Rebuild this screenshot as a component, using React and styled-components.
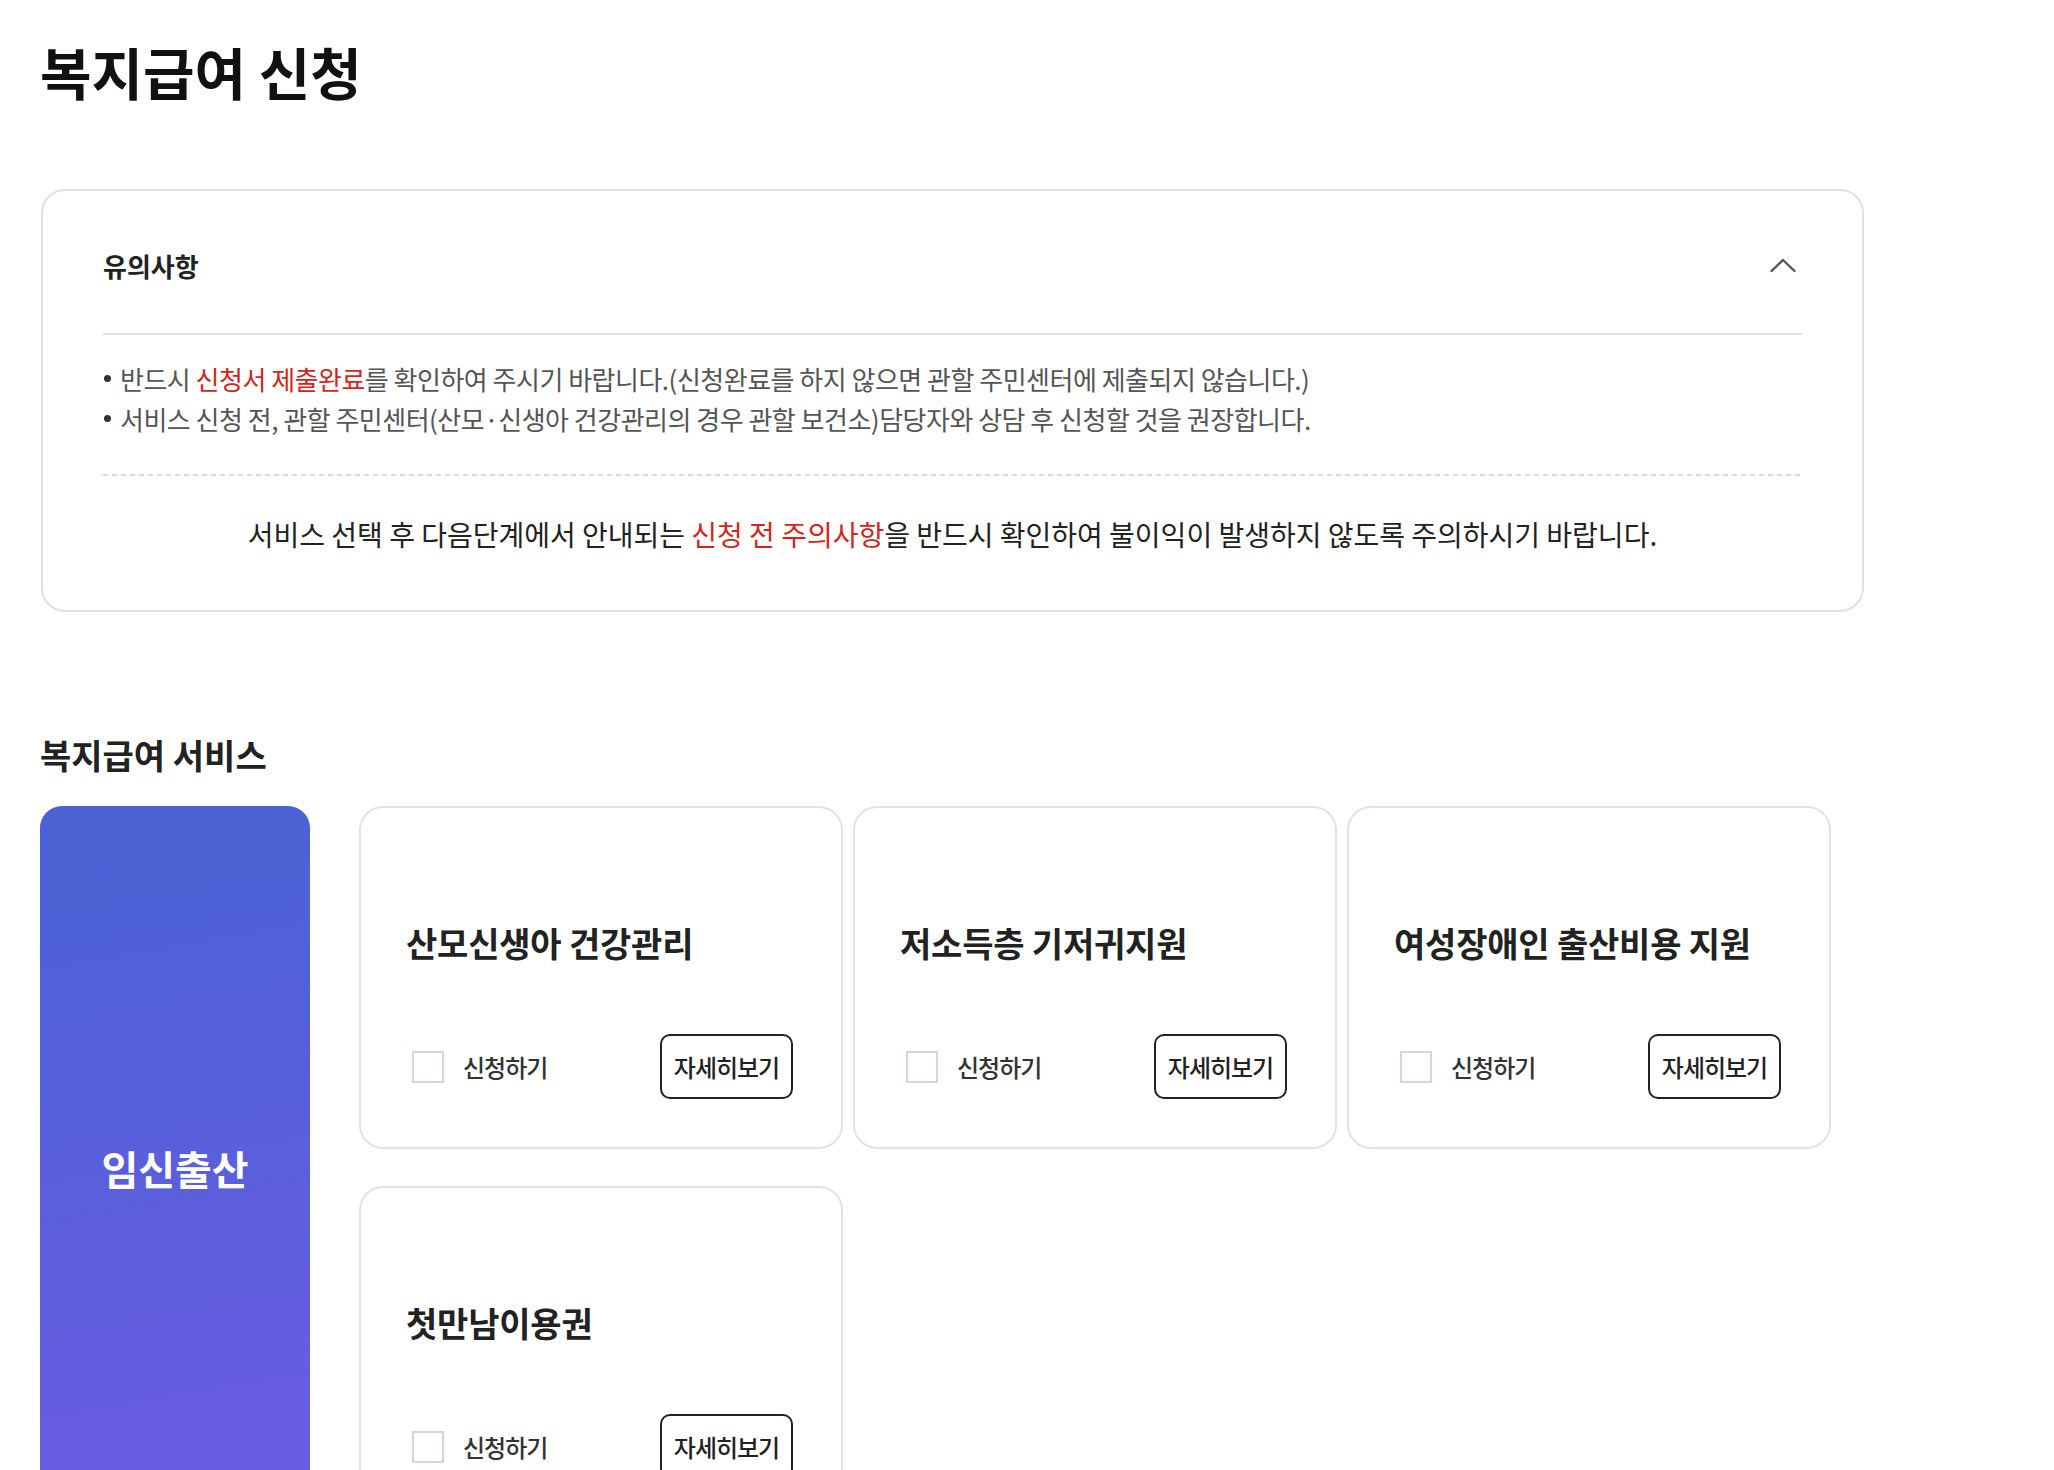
import React, { useState } from "react";
import styled, { createGlobalStyle } from "styled-components";

const GlobalStyle = createGlobalStyle`
  * {
    box-sizing: border-box;
  }
  body {
    margin: 0;
    background: #fff;
    font-family: "Noto Sans CJK KR", "Noto Sans", sans-serif;
    color: #222;
  }
`;

const services = [
  { id: 1, name: "산모신생아 건강관리" },
  { id: 2, name: "저소득층 기저귀지원" },
  { id: 3, name: "여성장애인 출산비용 지원" },
  { id: 4, name: "첫만남이용권" },
];

function ServiceCard({ name }) {
  const [checked, setChecked] = useState(false);
  return (
    <Card>
      <CardTitle>{name}</CardTitle>
      <CardFooter>
        <CheckLabel>
          <CheckBox
            type="checkbox"
            checked={checked}
            onChange={() => setChecked(!checked)}
          />
          <span>신청하기</span>
        </CheckLabel>
        <DetailButton>자세히보기</DetailButton>
      </CardFooter>
    </Card>
  );
}

function App() {
  const [open, setOpen] = useState(true);

  return (
    <Page>
      <GlobalStyle />
      <PageTitle>복지급여 신청</PageTitle>

      <Notice>
        <NoticeHead onClick={() => setOpen(!open)}>
          <h3>유의사항</h3>
          <svg width="26" height="15" viewBox="0 0 26 15" fill="none">
            <polyline
              points={open ? "1.5,13 13,2 24.5,13" : "1.5,2 13,13 24.5,2"}
              stroke="#555"
              strokeWidth="2.4"
              strokeLinecap="round"
              strokeLinejoin="round"
            />
          </svg>
        </NoticeHead>
        {open && (
          <>
            <BulletList>
              <li>
                반드시 <Red>신청서 제출완료</Red>를 확인하여 주시기
                바랍니다.(신청완료를 하지 않으면 관할 주민센터에 제출되지
                않습니다.)
              </li>
              <li>
                서비스 신청 전, 관할 주민센터(산모·신생아 건강관리의 경우 관할
                보건소)담당자와 상담 후 신청할 것을 권장합니다.
              </li>
            </BulletList>
            <Dashed />
            <NoticeFoot>
              서비스 선택 후 다음단계에서 안내되는 <Red>신청 전 주의사항</Red>을
              반드시 확인하여 불이익이 발생하지 않도록 주의하시기 바랍니다.
            </NoticeFoot>
          </>
        )}
      </Notice>

      <SectionTitle>복지급여 서비스</SectionTitle>
      <ServiceArea>
        <Category>임신출산</Category>
        <CardGrid>
          {services.map((s) => (
            <ServiceCard key={s.id} name={s.name} />
          ))}
        </CardGrid>
      </ServiceArea>
    </Page>
  );
}

export default App;

const Page = styled.div`
  padding: 34px 0 60px 40px;
  width: 1864px;
`;

const PageTitle = styled.h1`
  margin: 0;
  font-size: 56px;
  line-height: 73px;
  font-weight: 700;
  color: #111;
`;

const Notice = styled.section`
  margin-top: 82px;
  margin-left: 1px;
  border: 2px solid #e0e0e0;
  border-radius: 24px;
  padding: 0 60px;
`;

const NoticeHead = styled.div`
  height: 144px;
  padding-top: 6px;
  display: flex;
  align-items: center;
  justify-content: space-between;
  border-bottom: 2px solid #e2e2e2;
  cursor: pointer;

  h3 {
    margin: 0;
    font-size: 26px;
    font-weight: 700;
    color: #222;
  }

  svg {
    margin-right: 6px;
  }
`;

const BulletList = styled.ul`
  list-style: none;
  margin: 0;
  padding: 24px 0 35px;

  li {
    position: relative;
    padding-left: 17px;
    font-size: 26px;
    line-height: 40px;
    color: #555;
    letter-spacing: -0.5px;

    &::before {
      content: "";
      position: absolute;
      left: 1px;
      top: 16px;
      width: 7px;
      height: 7px;
      border-radius: 50%;
      background: #333;
    }
  }
`;

const Red = styled.span`
  color: #d2261c;
`;

const Dashed = styled.div`
  height: 2px;
  background-image: repeating-linear-gradient(
    to right,
    #dcdcdc 0 5px,
    transparent 5px 9px
  );
`;

const NoticeFoot = styled.p`
  margin: 0;
  padding: 38px 0 56px;
  text-align: center;
  font-size: 28px;
  line-height: 40px;
  color: #222;
`;

const SectionTitle = styled.h2`
  margin: 121px 0 0;
  font-size: 34px;
  line-height: 44px;
  font-weight: 600;
  color: #222;
`;

const ServiceArea = styled.div`
  margin-top: 29px;
  display: flex;
  align-items: stretch;
  gap: 49px;
`;

const Category = styled.div`
  width: 270px;
  flex-shrink: 0;
  border-radius: 22px;
  background: linear-gradient(170deg, #4962d3 0%, #5a5fdb 50%, #6d5be2 100%);
  display: flex;
  align-items: center;
  justify-content: center;
  color: #fff;
  font-size: 40px;
  font-weight: 700;
`;

const CardGrid = styled.div`
  display: grid;
  grid-template-columns: repeat(3, 484px);
  column-gap: 10px;
  row-gap: 37px;
`;

const Card = styled.div`
  height: 343px;
  border: 2px solid #e2e2e2;
  border-radius: 24px;
  padding: 0 48px 48px 45px;
  display: flex;
  flex-direction: column;
  justify-content: flex-end;
`;

const CardTitle = styled.h4`
  margin: 0 0 67px;
  font-size: 34px;
  line-height: 48px;
  font-weight: 700;
  color: #222;
  letter-spacing: -0.2px;
`;

const CardFooter = styled.div`
  display: flex;
  align-items: center;
  justify-content: space-between;
`;

const CheckLabel = styled.label`
  display: flex;
  align-items: center;
  gap: 19px;
  margin-left: 6px;
  font-size: 24px;
  font-weight: 500;
  color: #333;
  letter-spacing: -1px;
  cursor: pointer;
`;

const CheckBox = styled.input`
  appearance: none;
  margin: 0;
  width: 32px;
  height: 32px;
  border: 2px solid #cfd5e6;
  background: #fff;
  cursor: pointer;

  &:checked {
    background: #4962d3;
    border-color: #4962d3;
  }
`;

const DetailButton = styled.button`
  width: 133px;
  height: 65px;
  border: 2px solid #222;
  border-radius: 10px;
  background: #fff;
  font-family: inherit;
  font-size: 24px;
  font-weight: 500;
  color: #222;
  letter-spacing: -1px;
  padding: 0;
  cursor: pointer;
`;
